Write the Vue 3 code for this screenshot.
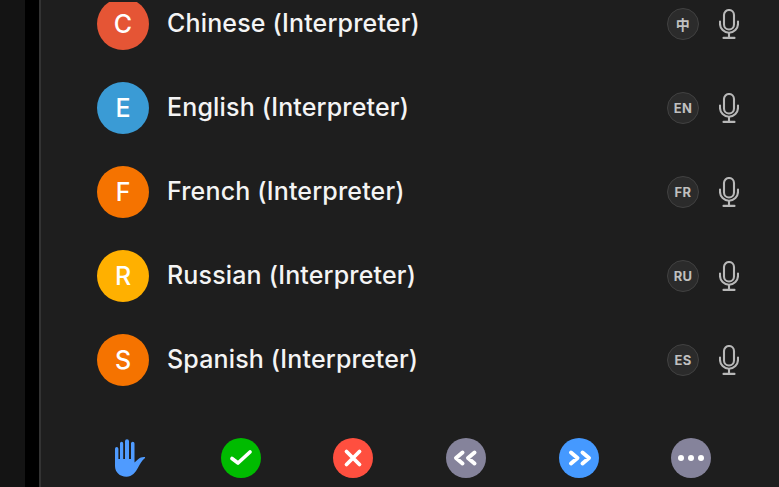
<template>
  <div class="screen">
    <div class="side"></div>
    <div class="gutter"></div>
    <div class="panel">
      <div class="list">
        <div v-for="p in people" :key="p.name" class="row">
          <div class="avatar" :style="{ background: p.color }">{{ p.letter }}</div>
          <div class="name">{{ p.name }}</div>
          <div class="badge" :class="{ cjk: p.code === '中' }">{{ p.code }}</div>
          <svg class="mic" width="20" height="30" viewBox="0 0 20 30" fill="none" stroke="#b8b8b8" stroke-width="2.100" stroke-linecap="round">
            <rect x="5" y="1" width="10" height="19.500" rx="5" />
            <path d="M1 12.500v2.200a9 9 0 0 0 18 0v-2.200" />
            <path d="M10 24v4.500M4.500 28.900h11" />
          </svg>
        </div>
      </div>
      <div class="toolbar">
        <div class="tool">
          <svg class="hand" width="31" height="38" viewBox="0 0 31 38">
            <path fill="#4f9bff" d="M0 9.700a1.700 1.700 0 0 1 3.400 0V20h1.600V4.400a1.600 1.600 0 0 1 3.200 0V20h1.800V2.300a2 2 0 0 1 4 0V20h2V4.400a1.750 1.750 0 0 1 3.500 0V23.500l3.600-3.300c1.800-1.500 3.800-2.200 6.200-2.100.9 0 1.100.7.500 1.200-2.800 2.300-4.600 5.200-6.700 9.200-2.500 4.800-6 9.200-11.600 9.200C4.500 37.700 0 33 0 27z" />
          </svg>
        </div>
        <div class="tool">
          <div class="btn green">
            <svg width="24" height="24" viewBox="0 0 24 24" fill="none" stroke="#fff" stroke-width="3.700" stroke-linecap="round" stroke-linejoin="round"><path d="M3 12.500L9 17 21 6" /></svg>
          </div>
        </div>
        <div class="tool">
          <div class="btn red">
            <svg width="24" height="24" viewBox="0 0 24 24" fill="none" stroke="#fff" stroke-width="3.800" stroke-linecap="round"><path d="M5.500 5.500l13 13M18.500 5.500l-13 13" /></svg>
          </div>
        </div>
        <div class="tool">
          <div class="btn grey">
            <svg width="28" height="24" viewBox="0 0 28 24" fill="none" stroke="#fff" stroke-width="4" stroke-linecap="round" stroke-linejoin="round"><path d="M10.500 6.500L4 12l6.500 5.500M22.500 6.500L16 12l6.500 5.500" /></svg>
          </div>
        </div>
        <div class="tool">
          <div class="btn blue">
            <svg width="28" height="24" viewBox="0 0 28 24" fill="none" stroke="#fff" stroke-width="4" stroke-linecap="round" stroke-linejoin="round"><path d="M6 6.500L12.500 12 6 17.500M17.500 6.500L24 12l-6.500 5.500" /></svg>
          </div>
        </div>
        <div class="tool">
          <div class="btn grey dots"><span></span><span></span><span></span></div>
        </div>
      </div>
    </div>
  </div>
</template>

<script setup>
const people = [
  { letter: 'C', name: 'Chinese (Interpreter)', code: '中', color: '#e55535' },
  { letter: 'E', name: 'English (Interpreter)', code: 'EN', color: '#3a9bd5' },
  { letter: 'F', name: 'French (Interpreter)', code: 'FR', color: '#f57300' },
  { letter: 'R', name: 'Russian (Interpreter)', code: 'RU', color: '#ffb000' },
  { letter: 'S', name: 'Spanish (Interpreter)', code: 'ES', color: '#f57300' }
]
</script>

<style>
html, body {
  margin: 0;
  background: #1e1e1e;
}
</style>

<style scoped>
.screen {
  display: flex;
  width: 779px;
  height: 487px;
  overflow: hidden;
  font-family: Inter, "Liberation Sans", "Noto Sans CJK SC", sans-serif;
}
.side {
  width: 25px;
  background: #141414;
}
.gutter {
  width: 14px;
  background: #000;
}
.panel {
  flex: 1;
  min-width: 0;
  display: flex;
  flex-direction: column;
  background: #1e1e1e;
  border-left: 2px solid #333;
}
.list {
  height: 404px;
  margin-top: 2px;
  overflow: hidden;
}
.row {
  display: flex;
  align-items: center;
  height: 84px;
  padding-left: 56px;
  position: relative;
  top: -20px;
}
.avatar {
  width: 52px;
  height: 52px;
  border-radius: 50%;
  flex: none;
  display: flex;
  align-items: center;
  justify-content: center;
  color: #fff;
  font-size: 25px;
  font-weight: 500;
}
.name {
  margin-left: 18px;
  margin-bottom: 2px;
  width: 500px;
  color: #f4f4f4;
  font-size: 25px;
  font-weight: 450;
  letter-spacing: 0.16px;
}
.badge {
  width: 32px;
  height: 32px;
  box-sizing: border-box;
  border: 1px solid #414141;
  border-radius: 50%;
  background: #2b2b2b;
  flex: none;
  display: flex;
  align-items: center;
  justify-content: center;
  color: #c0c0c0;
  font-size: 13px;
  font-weight: 700;
  letter-spacing: 0.3px;
}
.badge.cjk {
  font-size: 14px;
}
.mic {
  margin-left: 20px;
  flex: none;
}
.toolbar {
  display: grid;
  grid-template-columns: 113px 112px 112px 114px 112px 112px;
  margin-left: 31px;
  margin-top: 32px;
  height: 40px;
}
.tool {
  display: flex;
  align-items: center;
  justify-content: center;
}
.hand {
  margin-left: 4px;
}
.btn {
  width: 40px;
  height: 40px;
  border-radius: 50%;
  display: flex;
  align-items: center;
  justify-content: center;
}
.green {
  background: #00bb00;
}
.red {
  background: #ff4f3f;
}
.grey {
  background: #85839b;
}
.blue {
  background: #4599ff;
}
.dots {
  gap: 4px;
}
.dots span {
  width: 6px;
  height: 6px;
  border-radius: 50%;
  background: #fff;
}
</style>
